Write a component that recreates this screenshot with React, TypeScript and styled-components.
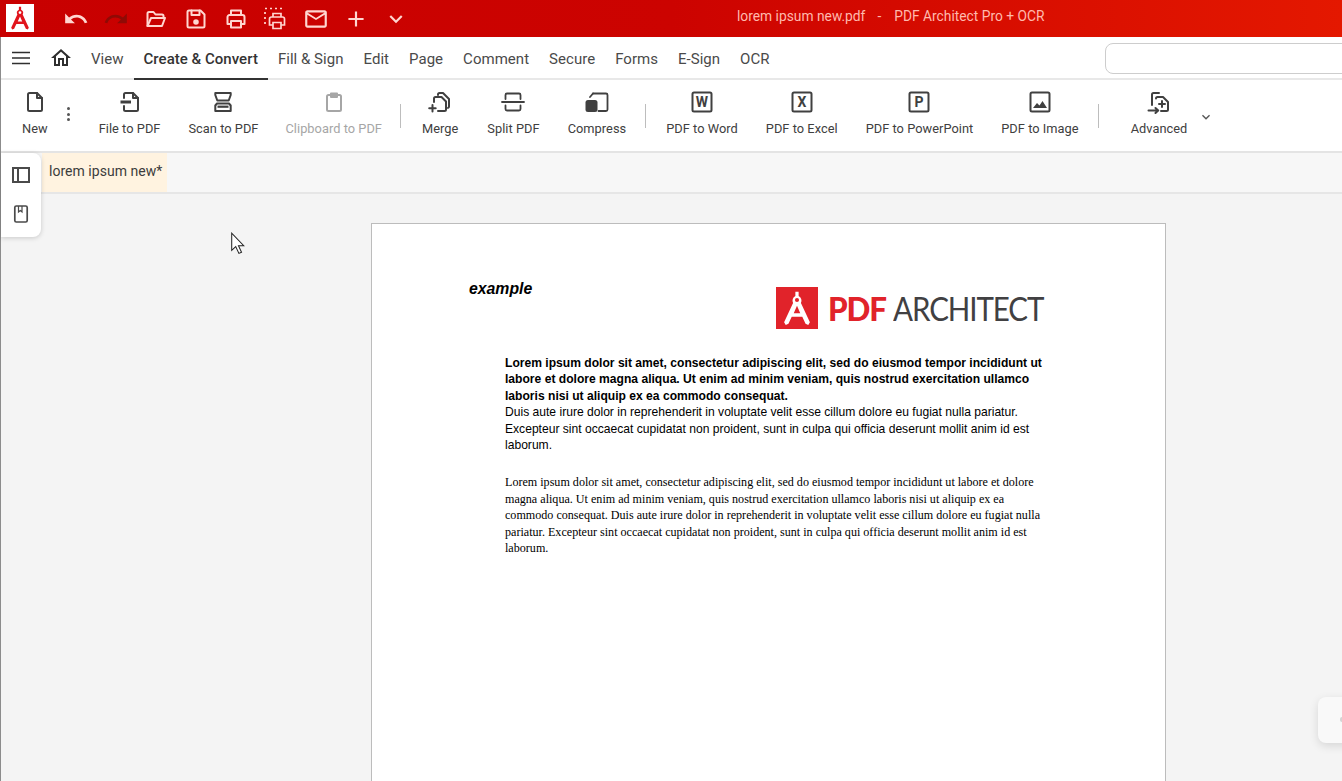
import React from "react";
import styled, { createGlobalStyle } from "styled-components";
import { MdUndo, MdRedo, MdAdd, MdKeyboardArrowDown, MdOutlineHome, MdMailOutline } from "react-icons/md";

const GlobalStyle = createGlobalStyle`
  html, body { margin: 0; padding: 0; height: 100%; overflow: hidden; }
  body { font-family: Roboto, "Liberation Sans", sans-serif; background: #f4f4f4; }
  * { box-sizing: border-box; }
`;

const Shell = styled.div`position: relative; width: 1342px; height: 781px; overflow: hidden; display: flex; flex-direction: column;`;

const TitleBar = styled.div`height: 37px; flex: none; display: flex; align-items: center; position: relative; background: linear-gradient(90deg, #c80000 0%, #cc0300 50%, #e41800 100%);`;
const AppLogo = styled.div`width: 28px; height: 28px; margin: 0 0 2px 6px; background: #fff; display: flex; align-items: center; justify-content: center;`;
const QuickBar = styled.div`display: flex; margin-left: 22px;`;
const QuickBtn = styled.div<{ $off?: boolean }>`width: 40px; height: 37px; display: flex; align-items: center; justify-content: center; color: ${p => (p.$off ? "#8f0a05" : "#ffd6d0")};`;
const WindowTitle = styled.div`flex: 1; padding: 0 0 6px 321px; font-size: 13.8px; color: #ffb9ad; white-space: pre;`;
const TitleDash = styled.span`margin: 0 13px 0 12px;`;

const Body = styled.div`flex: 1; min-height: 0; display: flex; flex-direction: column; border-left: 1px solid #8c8c8c; position: relative;`;

const NavBar = styled.div`height: 43px; flex: none; background: #fff; border-bottom: 2px solid #e8e8e8; display: flex; align-items: stretch; position: relative;`;
const NavIcon = styled.div<{ $w: number }>`width: ${p => p.$w}px; display: flex; align-items: center; justify-content: center; color: #2f2f2f;`;
const Tabs = styled.div`display: flex;`;
const Tab = styled.div<{ $on?: boolean }>`padding: 0 10px; height: 43px; line-height: 44px; font-size: 15px; letter-spacing: 0.03px; white-space: nowrap; color: ${p => (p.$on ? "#333" : "#4a4a4a")}; font-weight: ${p => (p.$on ? 500 : 400)}; border-bottom: 2px solid ${p => (p.$on ? "#333" : "transparent")};`;
const Search = styled.div`position: absolute; left: 1104px; top: 6px; width: 260px; height: 31px; border: 1px solid #cdcdcd; border-radius: 8px; background: #fff;`;

const Ribbon = styled.div`height: 73px; flex: none; background: #fff; border-bottom: 2px solid #e4e4e4; display: flex; align-items: flex-start; padding-left: 9px;`;
const Tool = styled.div<{ $off?: boolean; $pad?: number }>`display: flex; flex-direction: column; align-items: center; padding: 10px ${p => p.$pad ?? 14}px 0; font-size: 12.8px; letter-spacing: 0.04px; white-space: nowrap; color: ${p => (p.$off ? "#a6a6a6" : "#404040")};`;
const ToolIcon = styled.div`width: 24px; height: 24px; margin-bottom: 7px; display: flex; align-items: center; justify-content: center;`;
const Kebab = styled.div`width: 24px; margin: 27px 4px 0 -3px; display: flex; flex-direction: column; align-items: center; gap: 2.5px; span { width: 3px; height: 3px; border-radius: 50%; background: #555; }`;
const Sep = styled.div<{ $r?: number }>`width: 1px; height: 24px; margin: 24px ${p => p.$r ?? 6}px 0 5px; background: #bdbdbd;`;
const Caret = styled.div`margin: 29px 0 0 -3px; color: #555; display: flex;`;

const DocTabs = styled.div`height: 41px; flex: none; background: #f7f7f7; border-bottom: 2px solid #e6e6e6; padding-left: 41px; display: flex;`;
const DocTab = styled.div`width: 125px; height: 39px; background: #fff3e0; padding-left: 7px; line-height: 37px; font-size: 14px; letter-spacing: 0.03px; color: #3c3c3c;`;

const Stage = styled.div`flex: 1; min-height: 0; overflow: hidden; background: #f4f4f4; padding: 29px 0 0 370px;`;
const Page = styled.div`width: 795px; height: 1100px; background: #fff; border: 1px solid #bcbcbc; padding: 56px 0 0 97px;`;
const PageHead = styled.div`display: flex; height: 75px; align-items: flex-start;`;
const Example = styled.div`font: italic bold 15.8px "Liberation Sans", Arial, sans-serif; color: #000; line-height: 18px;`;
const Brand = styled.div`margin: 7px 0 0 244px; display: flex; align-items: center; gap: 10px;`;
const BrandMark = styled.div`width: 42px; height: 42px; background: #e1232a; display: flex; align-items: center; justify-content: center;`;
const BrandWord = styled.div`display: flex; font: 33px/42px Lato, "Open Sans", sans-serif; letter-spacing: -1.2px; color: #414042; white-space: nowrap;`;
const BrandRed = styled.span`display: block; color: #e1232a; font-weight: 900; margin-right: 4px; transform: scaleX(.95); transform-origin: left center;`;
const BrandGrey = styled.span`display: block; transform: scaleX(.895); transform-origin: left center;`;
const Copy = styled.div`margin-left: 36px; width: 560px; color: #000;`;
const SansBlock = styled.div`font: 12.1px/16.4px "Liberation Sans", Arial, sans-serif; b { font-weight: 700; }`;
const SerifBlock = styled.div`margin-top: 21px; font: 12.1px/16.4px "Liberation Serif", "Times New Roman", serif;`;

const SideCard = styled.div`position: absolute; left: 0; top: 116px; width: 40px; height: 84px; background: #fff; border-radius: 0 8px 8px 0; box-shadow: 0 1px 5px rgba(0,0,0,.18); display: flex; flex-direction: column; align-items: center; padding-top: 14px; gap: 22px; color: #4a4a4a;`;
const Pointer = styled.svg`position: absolute; left: 230px; top: 232px;`;
const FloatCard = styled.div`position: absolute; left: 1318px; top: 697px; width: 60px; height: 46px; background: #f9f9f9; border-radius: 8px; box-shadow: 0 3px 10px rgba(0,0,0,.12); &::after { content: ""; position: absolute; left: 22px; top: 20px; width: 4px; height: 5px; border-radius: 2px; background: #d4d4d4; }`;

type IconProps = { size?: number };
const Svg = ({ size = 24, children }: React.PropsWithChildren<IconProps>) => (
  <svg width={size} height={size} viewBox="0 0 24 24" fill="none" stroke="currentColor" strokeWidth={2} strokeLinejoin="round" strokeLinecap="round">{children}</svg>
);

const Compass = ({ color, size }: { color: string; size: number }) => (
  <svg width={size} height={size} viewBox="0 0 28 28" fill={color} fillRule="evenodd">
    <path d="M12.8 2h2.400v3.100a3.900 3.900 0 0 1 1.700 5.200L23.500 24.500l-1.200 2-2-.9-2.400-5.100H10.100l-2.400 5.100-2 .9-1.200-2 6.600-14.200a3.900 3.900 0 0 1 1.700-5.200zM14 6.600a1.500 1.500 0 1 0 0 3 1.500 1.500 0 0 0 0-3zM14 12.400l-2.400 5.400h4.800z" />
  </svg>
);

const MenuIcon = () => <Svg><path d="M3 6.500h18M3 12h18M3 17.500h18" strokeWidth={1.7} strokeLinecap="butt" /></Svg>;
const FolderIcon = () => <Svg><path d="M3.500 19V6.500A1.500 1.500 0 0 1 5 5h4.500l2 2.500H18a1.500 1.500 0 0 1 1.500 1.500V11" /><path d="M3.500 19h14.500l3-8H7z" /></Svg>;
const SaveIcon = () => <Svg><path d="M5 3.500h11.500l4 4V19a1.500 1.500 0 0 1-1.500 1.500H5A1.500 1.500 0 0 1 3.500 19V5A1.500 1.500 0 0 1 5 3.500z" /><path d="M7.500 3.500v4.500h8V3.500" /><circle cx="12" cy="15" r="1.800" fill="currentColor" /></Svg>;
const PrintIcon = () => <Svg><path d="M7 8V3.500h10V8" /><path d="M7 17H3.500v-7A2 2 0 0 1 5.500 8h13a2 2 0 0 1 2 2v7H17" /><path d="M7 14h10v6.500H7z" /></Svg>;
const PrintAreaIcon = () => (
  <svg width="24" height="24" viewBox="0 0 24 24" fill="none" stroke="currentColor" strokeWidth="1.700">
    <path d="M1 1.500h2M6 1.500h2M11 1.500h2M16 1.500h2M1 5v2M1 10v2M1 15v2" />
    <path d="M9 10V6.500h8V10M9 18H5.500v-6a2 2 0 0 1 2-2h11a2 2 0 0 1 2 2v6H17M9 15.500h8v6H9z" />
  </svg>
);

const NewIcon = () => <Svg><path d="M6.500 3h7.500l5 5v11.500a1.500 1.500 0 0 1-1.500 1.500h-11A1.500 1.500 0 0 1 5 19.500v-15A1.500 1.500 0 0 1 6.500 3z" /><path d="M14 3v5h5" /></Svg>;
const FileToPdfIcon = () => <Svg><path d="M6 8V4.500A1.500 1.500 0 0 1 7.500 3H15l5 5v11.500a1.500 1.500 0 0 1-1.500 1.500h-11A1.500 1.500 0 0 1 6 19.500V16" /><path d="M2.500 12H13" strokeWidth={3} strokeLinecap="butt" /><path d="M15 3v5h5" /></Svg>;
const ScanIcon = () => <Svg><path d="M4.300 3h15.400v2l-2 5.500H6.300l-2-5.500z" /><path d="M6 13.500h12l1.700 2v5.500H4.300v-5.500z" /><path d="M6.500 16.700h11" strokeWidth={2.200} strokeLinecap="butt" /></Svg>;
const ClipIcon = () => <Svg><path d="M8 5H6.500A1.500 1.500 0 0 0 5 6.500v13A1.500 1.500 0 0 0 6.500 21h11a1.500 1.500 0 0 0 1.500-1.500v-13A1.500 1.500 0 0 0 17.500 5H16" /><path d="M9 3.500h6V7H9z" fill="currentColor" /></Svg>;
const MergeIcon = () => <Svg><path d="M6 12V8.500A1.500 1.500 0 0 1 7.500 7h6l4.500 4.500v8a1.500 1.500 0 0 1-1.500 1.500H10" /><path d="M10 5V4.500A1.500 1.500 0 0 1 11.500 3H15l6 6v7.500a1.500 1.500 0 0 1-1 1.400" /><path d="M4.500 15v6.500M1.200 18.300h6.500" /></Svg>;
const SplitIcon = () => <Svg><path d="M4.500 9V5A1.500 1.500 0 0 1 6 3.500h12A1.500 1.500 0 0 1 19.500 5v4" strokeWidth={1.800} /><path d="M4.500 15.500V19A1.500 1.500 0 0 0 6 20.500h12a1.500 1.500 0 0 0 1.500-1.500v-3.500" strokeWidth={1.800} /><path d="M1 12h22" strokeWidth={1.800} /></Svg>;
const CompressIcon = () => (
  <Svg>
    <path d="M8 3.500h13a1.500 1.500 0 0 1 1.500 1.500v14.500A1.500 1.500 0 0 1 21 21h-7.500" strokeWidth={1.800} />
    <rect x="0.500" y="10" width="12" height="12" rx="2.500" fill="currentColor" stroke="none" />
    <path d="M8 3.500L5 7" strokeWidth={1.800} />
  </Svg>
);
const LetterIcon = ({ letter }: { letter: string }) => (
  <svg width="24" height="24" viewBox="0 0 24 24" fill="none">
    <rect x="2.500" y="2.500" width="19" height="19" rx="1.500" stroke="currentColor" strokeWidth="2" />
    <text x="12" y="17" textAnchor="middle" fontSize="14" fontWeight="700" fontFamily="Roboto, sans-serif" fill="currentColor">{letter}</text>
  </svg>
);
const ImageIcon = () => (
  <svg width="24" height="24" viewBox="0 0 24 24" fill="none">
    <rect x="2.500" y="2.500" width="19" height="19" rx="1.500" stroke="currentColor" strokeWidth="2" />
    <path d="M5 18l4-5 2.500 2.500L14.500 11 19 18z" fill="currentColor" />
  </svg>
);
const AdvancedIcon = () => <Svg><path d="M5 15V4.500A1.500 1.500 0 0 1 6.500 3H12" /><path d="M9 8.500A1.500 1.500 0 0 1 10.500 7H16l5 5v7.500a1.500 1.500 0 0 1-1.500 1.500H14" /><path d="M15 11v6M12 14h6" /><path d="M1.500 20.500H11M8.500 18l2.700 2.500L8.500 23" /></Svg>;

const PanelIcon = () => <svg width="20" height="16" viewBox="0 0 20 16" fill="none" stroke="currentColor" strokeWidth="2"><rect x="2" y="1" width="16" height="14" /><path d="M7 1v14" /></svg>;
const BookmarkIcon = () => <svg width="16" height="18" viewBox="0 0 16 18" fill="none" stroke="currentColor" strokeWidth="1.700"><rect x="1.800" y="1" width="12.400" height="16" rx="1.500" /><path d="M5.500 1v6l1.800-1.500L9 7V1" strokeWidth="1.200" /></svg>;

const tabs = ["View", "Create & Convert", "Fill & Sign", "Edit", "Page", "Comment", "Secure", "Forms", "E-Sign", "OCR"];

export default function App() {
  return (
    <Shell>
      <GlobalStyle />
      <TitleBar>
        <AppLogo><Compass color="#e1141c" size={26} /></AppLogo>
        <QuickBar>
          <QuickBtn><MdUndo size={26} /></QuickBtn>
          <QuickBtn $off><MdRedo size={26} /></QuickBtn>
          <QuickBtn><FolderIcon /></QuickBtn>
          <QuickBtn><SaveIcon /></QuickBtn>
          <QuickBtn><PrintIcon /></QuickBtn>
          <QuickBtn><PrintAreaIcon /></QuickBtn>
          <QuickBtn><MdMailOutline size={26} /></QuickBtn>
          <QuickBtn><MdAdd size={26} /></QuickBtn>
          <QuickBtn><MdKeyboardArrowDown size={26} /></QuickBtn>
        </QuickBar>
        <WindowTitle>lorem ipsum new.pdf<TitleDash>-</TitleDash>PDF Architect Pro + OCR</WindowTitle>
      </TitleBar>
      <Body>
        <NavBar>
          <NavIcon $w={40}><MenuIcon /></NavIcon>
          <NavIcon $w={40}><MdOutlineHome size={24} /></NavIcon>
          <Tabs>
            {tabs.map(t => <Tab key={t} $on={t === "Create & Convert"}>{t}</Tab>)}
          </Tabs>
          <Search />
        </NavBar>
        <Ribbon>
          <Tool $pad={12}><ToolIcon><NewIcon /></ToolIcon>New</Tool>
          <Kebab><span /><span /><span /></Kebab>
          <Tool><ToolIcon><FileToPdfIcon /></ToolIcon>File to PDF</Tool>
          <Tool><ToolIcon><ScanIcon /></ToolIcon>Scan to PDF</Tool>
          <Tool $off $pad={13}><ToolIcon><ClipIcon /></ToolIcon>Clipboard to PDF</Tool>
          <Sep />
          <Tool $pad={15}><ToolIcon><MergeIcon /></ToolIcon>Merge</Tool>
          <Tool><ToolIcon><SplitIcon /></ToolIcon>Split PDF</Tool>
          <Tool><ToolIcon><CompressIcon /></ToolIcon>Compress</Tool>
          <Sep />
          <Tool><ToolIcon><LetterIcon letter="W" /></ToolIcon>PDF to Word</Tool>
          <Tool><ToolIcon><LetterIcon letter="X" /></ToolIcon>PDF to Excel</Tool>
          <Tool><ToolIcon><LetterIcon letter="P" /></ToolIcon>PDF to PowerPoint</Tool>
          <Tool><ToolIcon><ImageIcon /></ToolIcon>PDF to Image</Tool>
          <Sep $r={18} />
          <Tool><ToolIcon><AdvancedIcon /></ToolIcon>Advanced</Tool>
          <Caret><MdKeyboardArrowDown size={16} /></Caret>
        </Ribbon>
        <DocTabs><DocTab>lorem ipsum new*</DocTab></DocTabs>
        <Stage>
          <Page>
            <PageHead>
              <Example>example</Example>
              <Brand>
                <BrandMark><Compass color="#fff" size={38} /></BrandMark>
                <BrandWord><BrandRed>PDF</BrandRed><BrandGrey>ARCHITECT</BrandGrey></BrandWord>
              </Brand>
            </PageHead>
            <Copy>
              <SansBlock>
                <b>Lorem ipsum dolor sit amet, consectetur adipiscing elit, sed do eiusmod tempor incididunt ut<br />
                labore et dolore magna aliqua. Ut enim ad minim veniam, quis nostrud exercitation ullamco<br />
                laboris nisi ut aliquip ex ea commodo consequat.</b><br />
                Duis aute irure dolor in reprehenderit in voluptate velit esse cillum dolore eu fugiat nulla pariatur.<br />
                Excepteur sint occaecat cupidatat non proident, sunt in culpa qui officia deserunt mollit anim id est<br />
                laborum.
              </SansBlock>
              <SerifBlock>
                Lorem ipsum dolor sit amet, consectetur adipiscing elit, sed do eiusmod tempor incididunt ut labore et dolore<br />
                magna aliqua. Ut enim ad minim veniam, quis nostrud exercitation ullamco laboris nisi ut aliquip ex ea<br />
                commodo consequat. Duis aute irure dolor in reprehenderit in voluptate velit esse cillum dolore eu fugiat nulla<br />
                pariatur. Excepteur sint occaecat cupidatat non proident, sunt in culpa qui officia deserunt mollit anim id est<br />
                laborum.
              </SerifBlock>
            </Copy>
          </Page>
        </Stage>
        <SideCard><PanelIcon /><BookmarkIcon /></SideCard>
      </Body>
      <Pointer width="16" height="23" viewBox="0 0 14 20">
        <path d="M1.500 1v15l3.500-3.300 2.800 6 2.300-1-2.700-5.800h4.600z" fill="#fff" stroke="#222" strokeWidth="0.900" strokeLinejoin="miter" />
      </Pointer>
      <FloatCard />
    </Shell>
  );
}
